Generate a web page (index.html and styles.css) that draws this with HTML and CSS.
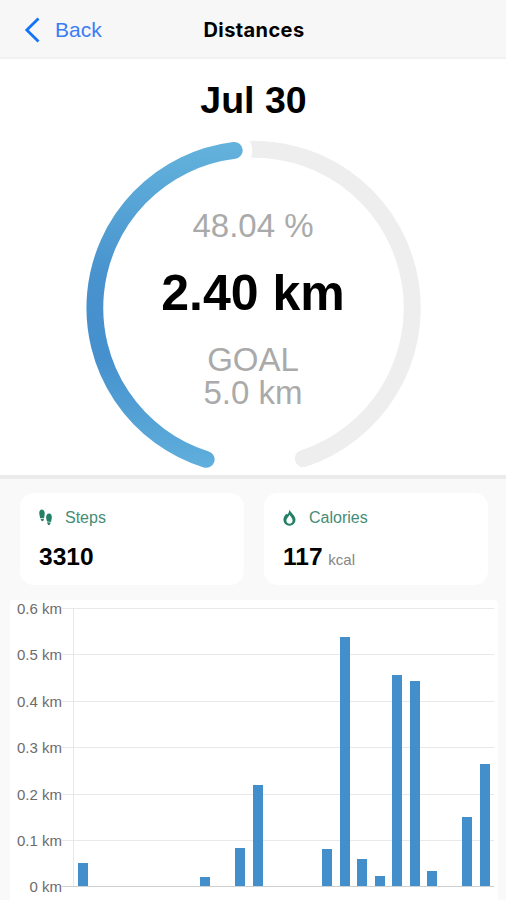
FILE: index.html
```html
<!DOCTYPE html>
<html lang="en">
<head>
<meta charset="utf-8">
<title>Distances</title>
<link rel="stylesheet" href="styles.css">
</head>
<body>
<header class="nav">
  <a class="back">
    <svg class="chevron" width="16" height="26" viewBox="0 0 16 26"><path d="M14.5 1.5 2.8 13 14.5 24.5" fill="none" stroke="#1474f6" stroke-width="2.8"/></svg>
    <span>Back</span>
  </a>
  <h1 class="title">Distances</h1>
  <span></span>
</header>
<section class="summary">
  <h2 class="date">Jul 30</h2>
  <div class="gauge">
    <svg class="ring" width="340" height="340" viewBox="0 0 340 340">
      <defs>
        <linearGradient id="arc" x1="0" y1="8" x2="0" y2="330" gradientUnits="userSpaceOnUse">
          <stop offset="0" stop-color="#63b2dc"/>
          <stop offset=".4" stop-color="#4893ce"/>
          <stop offset=".65" stop-color="#4590cd"/>
          <stop offset="1" stop-color="#60afdc"/>
        </linearGradient>
      </defs>
      <g fill="none" stroke-linecap="round">
        <path d="M170.5 11.2A158.7 158.7 0 0 1 220.3 320.6" stroke="#eeeeee" stroke-width="17"/>
        <circle cx="151.3" cy="12.4" r="18" fill="#fff"/>
        <path d="M123.2 321.4A158.7 158.7 0 0 1 151.3 12.4" stroke="url(#arc)" stroke-width="16.8"/>
      </g>
    </svg>
    <div class="readout">
      <div class="percent">48.04 %</div>
      <div class="distance">2.40 km</div>
      <div class="goal">GOAL<br>5.0 km</div>
    </div>
  </div>
</section>
<main class="details">
  <div class="cards">
    <article class="card">
      <div class="label">
        <svg width="14" height="18" viewBox="0 0 14 18" fill="#237f65"><path d="M.3 5C0 2.3 1.1.6 3 .6S6 3 5.7 5.3L5.1 9 1.2 9.3ZM1.7 10 4.9 9.7C5.1 12.9 2 12.9 1.7 10ZM7.1 9C7 6.5 8.1 4.6 10.1 4.6S13.1 6.5 12.8 9L12 13 8 12.6ZM8.2 13.3 11.6 13.6C11.4 17.2 8.2 16.8 8.2 13.3Z"/></svg>
        <span>Steps</span>
      </div>
      <div class="value">3310</div>
    </article>
    <article class="card">
      <div class="label">
        <svg width="14" height="18" viewBox="0 0 14 18"><path fill="#237f65" fill-rule="evenodd" d="M6.4.6C7.5 3.8 12.5 6.4 12.5 10.8A6 6 0 0 1 .4 10.8C.4 8.3 1.8 6.3 3.4 4.8L4.2 5.5C5.7 4.3 6.3 2.6 6.4.6ZM6.5 5.8C5.9 7.9 3.4 9.1 3.4 11.6A3.1 3.1 0 0 0 9.6 11.6C9.6 9.2 7.5 7.6 6.5 5.8Z"/></svg>
        <span>Calories</span>
      </div>
      <div class="value">117 <small>kcal</small></div>
    </article>
  </div>
  <div class="chart">
    <div class="axis">
      <span>0.6 km</span><span>0.5 km</span><span>0.4 km</span><span>0.3 km</span><span>0.2 km</span><span>0.1 km</span><span>0 km</span>
    </div>
    <div class="plot">
      <div class="grid"><i></i><i></i><i></i><i></i><i></i><i></i></div>
      <div class="bars">
        <b style="height:23px"></b><b></b><b></b><b></b><b></b><b></b><b></b><b style="height:9px"></b>
        <b></b><b style="height:38px"></b><b style="height:101px"></b><b></b><b></b><b></b><b style="height:37px"></b><b style="height:249px"></b>
        <b style="height:27px"></b><b style="height:10px"></b><b style="height:211px"></b><b style="height:205px"></b><b style="height:15px"></b><b></b><b style="height:69px"></b><b style="height:122px"></b>
      </div>
    </div>
  </div>
</main>
</body>
</html>
```
FILE: styles.css
```css
* { box-sizing: border-box; }
body {
  margin: 0;
  width: 506px;
  height: 900px;
  overflow: hidden;
  background: #f9f9f9;
  color: #000;
  font-family: "Liberation Sans", Arial, sans-serif;
}
.nav {
  display: grid;
  grid-template-columns: 1fr auto 1fr;
  align-items: center;
  height: 59px;
  padding: 1px 22px 0 24px;
  background: #f7f7f7;
  border-bottom: 2px solid #f1f1f1;
}
.back {
  display: flex;
  align-items: center;
  gap: 15px;
  padding-top: 2px;
  color: #3b7df5;
  font-size: 21px;
}
.title {
  margin: 2px 0 0;
  font: 700 20px/24px Inter, sans-serif;
  letter-spacing: .4px;
}
.summary {
  height: 420px;
  padding-top: 19px;
  background: #fff;
  border-bottom: 4px solid #ebebeb;
}
.date {
  margin: 0;
  padding-left: 1px;
  text-align: center;
  font-size: 37.5px;
  line-height: 44px;
}
.gauge {
  display: grid;
  width: 340px;
  margin: 16px auto 0;
}
.ring, .readout { grid-area: 1 / 1; }
.readout {
  padding-top: 69px;
  text-align: center;
}
.percent, .goal {
  color: #aaa;
  font-size: 33px;
  line-height: 38px;
}
.distance {
  margin-top: 19px;
  font-size: 50px;
  font-weight: 700;
  line-height: 58px;
}
.goal {
  margin-top: 21px;
  line-height: 33px;
}
.details { padding: 14px 8px 0 10px; }
.cards {
  display: grid;
  grid-template-columns: 1fr 1fr;
  gap: 20px;
  padding: 0 10px;
}
.card {
  height: 92px;
  padding: 15px 19px;
  background: #fff;
  border-radius: 14px;
}
.label {
  display: flex;
  align-items: center;
  gap: 12px;
  height: 20px;
  color: #458c76;
  font-size: 16px;
}
.value {
  margin-top: 14px;
  font-size: 24.5px;
  font-weight: 700;
  line-height: 30px;
}
.value small {
  margin-left: -1px;
  color: #858585;
  font-size: 15px;
  font-weight: 400;
}
.chart {
  display: flex;
  height: 310px;
  margin-top: 15px;
  padding-top: 8px;
  background: #fff;
  border-radius: 4px;
}
.axis {
  display: flex;
  flex-direction: column;
  width: 52px;
  margin-top: -22px;
  color: #6c6c6c;
  font-size: 15px;
  line-height: 46.4px;
  text-align: right;
}
.plot {
  display: grid;
  width: 432px;
  height: 279px;
  border-bottom: 1px solid #cfcfcf;
}
.grid, .bars { grid-area: 1 / 1; }
.grid {
  display: grid;
  grid-template-rows: repeat(6, 46.4px);
  background: linear-gradient(#e8e8e8, #e8e8e8) 11px 0 / 1px 100% no-repeat;
}
.grid i { border-top: 1px solid #e8e8e8; }
.bars {
  display: grid;
  grid-template-columns: repeat(24, 17.46px);
  align-items: end;
  justify-items: center;
  margin-left: 12.4px;
}
.bars b {
  width: 10px;
  background: #428fcb;
}
```
